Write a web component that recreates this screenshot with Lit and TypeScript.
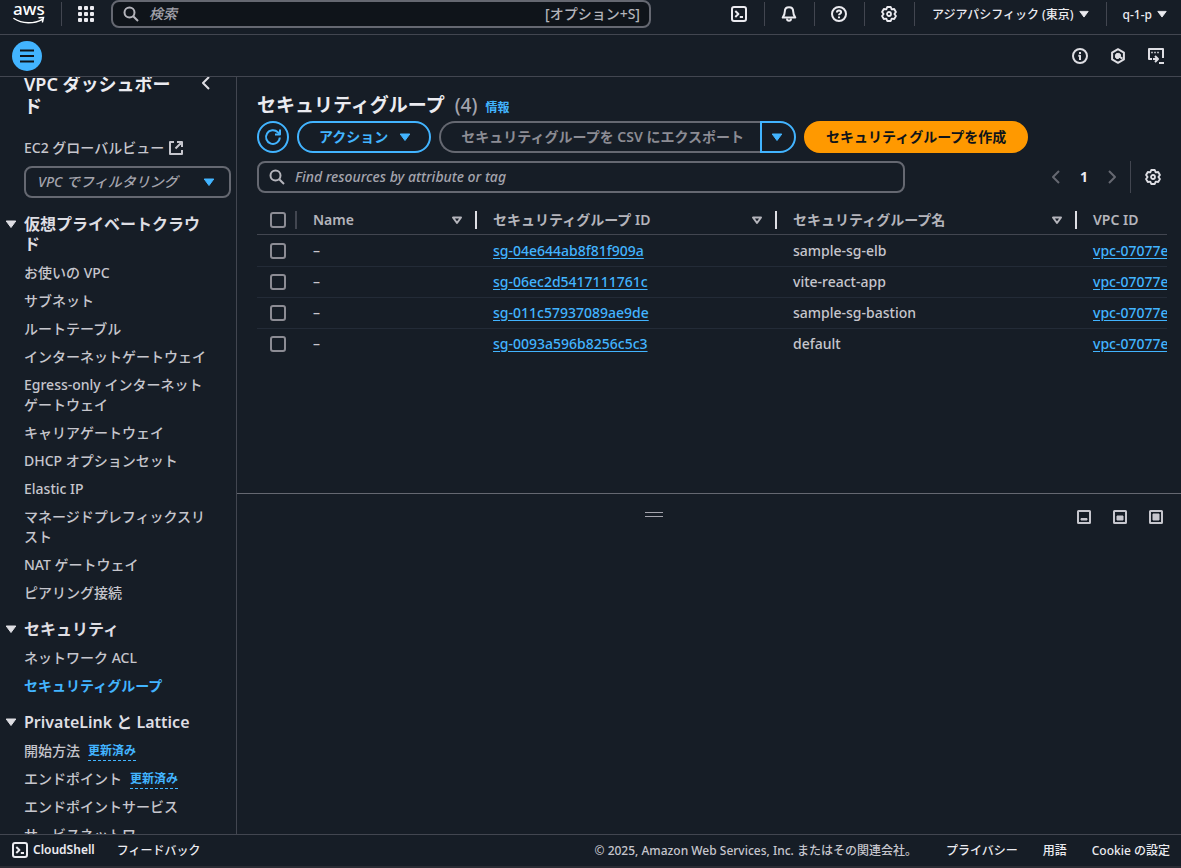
import { LitElement, html, svg, css, nothing } from "lit";
import { customElement, property } from "lit/decorators.js";

/** Outline of a six-lobed gear centred in a 16px box. */
const gearPath = (() => {
  const at = (deg: number, r: number) => {
    const a = (deg * Math.PI) / 180;
    return `${(8 + r * Math.cos(a)).toFixed(2)} ${(8 + r * Math.sin(a)).toFixed(2)}`;
  };
  const points: string[] = [];
  for (let k = 0; k < 6; k++) {
    const a = 60 * k - 90;
    points.push(at(a - 14, 7.2), at(a + 14, 7.2), at(a + 30, 5.4));
  }
  return `M${points.join("L")}Z`;
})();

const icons: Record<string, unknown> = {
  search: svg`<circle cx="6.5" cy="6.5" r="5" /><path d="M10.2 10.2 15 15" />`,
  shell: svg`<rect x="1" y="1" width="14" height="14" rx="2" /><path d="M4.3 5 7.4 8 4.3 11M8.8 11H12" />`,
  bell: svg`<path d="M8 1.2c-2.7 0-4.2 1.9-4.2 4.4 0 3.2-.9 4.4-2.1 6h12.6c-1.2-1.6-2.1-2.8-2.1-6 0-2.5-1.5-4.4-4.2-4.4Z" /><path d="M6 12.5c0 1.3.8 2.2 2 2.2s2-.9 2-2.2" />`,
  help: svg`<circle cx="8" cy="8" r="7" /><path d="M5.9 6.5c0-1.3.9-2 2.1-2s2.1.7 2.1 1.8c0 1.5-2.1 1.5-2.1 3" /><path d="M8 10.6v1.600" />`,
  gear: svg`<path d=${gearPath} stroke-width="1.900" /><circle cx="8" cy="8" r="2" stroke-width="1.800" />`,
  info: svg`<circle cx="8" cy="8" r="7" /><path d="M8 4v2M6.300 7.700H8V12" />`,
  hex: svg`<path d="M8 1.200 13.900 4.600v6.800L8 14.800 2.100 11.400V4.600Z" /><path class="solid" d="M10.700 8.300A2.700 2.700 0 1 0 8 10.700Z" stroke-width="0" /><path d="M8 8l4.500 2.600" />`,
  screen: svg`<path d="M4 11H1V1h14v9" /><path d="M4 3.700v1.600M7 3.700v1.600M10 3.700v1.600" stroke-width="1.500" /><path d="M5 11h4.500M7 8l3 3-3 3M11 15h5" />`,
  menu: svg`<path d="M1 2.500h14M1 8h14M1 13.500h14" />`,
  left: svg`<path d="M11 2 5 8l6 6" />`,
  right: svg`<path d="m5 2 6 6-6 6" />`,
  external: svg`<path d="M6 2H2v12h12v-4M9 2h5v5M14 2 7.500 8.500" />`,
  refresh: svg`<path d="M14.800 8.500A6.900 6.900 0 1 1 12.900 3.300l2 2" /><path d="M15 .5v5h-5" />`,
  caret: svg`<path class="solid" d="M3.200 5h9.600L8 11.500Z" />`,
  sort: svg`<path d="M4 5.500h8L8 11Z" />`,
  panelLow: svg`<rect x="2" y="2" width="12" height="12" rx=".5" /><path class="solid" d="M5 9.500h6V11H5Z" />`,
  panelMid: svg`<rect x="2" y="2" width="12" height="12" rx=".5" /><path class="solid" d="M5 7h6v4H5Z" />`,
  panelFull: svg`<rect x="2" y="2" width="12" height="12" rx=".5" /><path class="solid" d="M5 5h6v6H5Z" />`,
};

@customElement("ui-icon")
export class UiIcon extends LitElement {
  @property() name = "";
  static styles = css`
    :host { display: inline-flex; width: 16px; height: 16px; flex: none; }
    svg { width: 100%; height: 100%; fill: none; stroke: currentColor; stroke-width: 2; stroke-linejoin: round; overflow: visible; }
    .solid { fill: currentColor; stroke-width: 1; }
  `;
  render() {
    return html`<svg viewBox="0 0 16 16" aria-hidden="true">${icons[this.name] ?? nothing}</svg>`;
  }
}

interface NavItem { label: string; badge?: string; active?: boolean }
interface NavSection { title: string; items: NavItem[] }

const sections: NavSection[] = [
  {
    title: "仮想プライベートクラウド",
    items: [
      { label: "お使いの VPC" },
      { label: "サブネット" },
      { label: "ルートテーブル" },
      { label: "インターネットゲートウェイ" },
      { label: "Egress-only インターネットゲートウェイ" },
      { label: "キャリアゲートウェイ" },
      { label: "DHCP オプションセット" },
      { label: "Elastic IP" },
      { label: "マネージドプレフィックスリスト" },
      { label: "NAT ゲートウェイ" },
      { label: "ピアリング接続" },
    ],
  },
  {
    title: "セキュリティ",
    items: [{ label: "ネットワーク ACL" }, { label: "セキュリティグループ", active: true }],
  },
  {
    title: "PrivateLink と Lattice",
    items: [
      { label: "開始方法", badge: "更新済み" },
      { label: "エンドポイント", badge: "更新済み" },
      { label: "エンドポイントサービス" },
      { label: "サービスネットワー" },
    ],
  },
];

const groups = [
  { id: "sg-04e644ab8f81f909a", name: "sample-sg-elb" },
  { id: "sg-06ec2d5417111761c", name: "vite-react-app" },
  { id: "sg-011c57937089ae9de", name: "sample-sg-bastion" },
  { id: "sg-0093a596b8256c5c3", name: "default" },
];

const base = css`
  * { box-sizing: border-box; }
  button, input, select { font: inherit; color: inherit; margin: 0; }
  button { background: none; border: 0; padding: 0; cursor: pointer; display: inline-flex; align-items: center; justify-content: center; }
  a { color: inherit; text-decoration: none; }
`;

@customElement("console-header")
export class ConsoleHeader extends LitElement {
  static styles = [
    base,
    css`
      :host { display: block; color: #ebebf0; }
      .bar { display: flex; align-items: center; height: 35px; padding: 0 12px 6px 13px; border-bottom: 1px solid #424650; font-size: 12px; }
      .home { display: flex; }
      .logo { width: 32px; height: 24px; display: block; }
      .logo text { font: 500 17px "Noto Sans", sans-serif; fill: #fff; }
      .logo path { fill: none; stroke: #fff; stroke-linecap: round; }
      .rule { width: 1px; height: 24px; background: #424650; flex: none; }
      .logo-rule { margin: 0 16px; }
      .search { flex: 0 1 540px; margin-left: 17px; height: 28px; display: flex; align-items: center; gap: 10px; padding: 0 9px 0 10px; background: #0f141a; border: 2px solid #656871; border-radius: 8px; color: #b4b4bb; font-size: 14px; line-height: 20px; }
      .search input { flex: 1; min-width: 0; background: none; border: 0; outline: 0; padding: 0; }
      .search input::placeholder { color: #a4a4ad; opacity: 1; font-style: italic; }
      .spacer { flex: 1; }
      .tools { display: flex; align-items: center; }
      .tool { width: 49px; height: 24px; }
      .menu { gap: 3px; }
      .menu ui-icon { width: 14px; height: 14px; }
      .region { padding: 0 15px 0 17px; }
      .account { padding-left: 16px; }
      .sub { display: flex; align-items: center; justify-content: space-between; height: 42px; padding: 0 17px 0 12px; border-bottom: 1px solid #424650; }
      .burger { width: 30px; height: 30px; border-radius: 50%; background: #42b4ff; color: #0f141a; }
      .sub-tools { display: flex; gap: 22px; color: #dedee3; }
    `,
  ];
  render() {
    return html`
      <header class="bar">
        <a class="home" href="#" aria-label="aws">
          <svg class="logo" viewBox="0 0 32 24">
            <text x="0" y="13">aws</text>
            <path d="M1 16.500c8 5.500 20 5.500 28.500.8M26 15.800l4.500-.2-1 4.200" stroke-width="1.500" />
          </svg>
        </a>
        <span class="rule logo-rule"></span>
        <button aria-label="サービス">
          <svg width="16" height="16" fill="currentColor">
            ${[0, 6, 12].map((y) => [0, 6, 12].map((x) => svg`<rect x=${x} y=${y} width="4" height="4" rx="1" />`))}
          </svg>
        </button>
        <label class="search">
          <ui-icon name="search"></ui-icon>
          <input type="text" placeholder="検索" aria-label="検索" />
          <span>[オプション+S]</span>
        </label>
        <span class="spacer"></span>
        <div class="tools">
          <button class="tool" aria-label="CloudShell"><ui-icon name="shell"></ui-icon></button>
          <span class="rule"></span>
          <button class="tool" aria-label="通知"><ui-icon name="bell"></ui-icon></button>
          <span class="rule"></span>
          <button class="tool" aria-label="ヘルプ"><ui-icon name="help"></ui-icon></button>
          <span class="rule"></span>
          <button class="tool" aria-label="設定"><ui-icon name="gear"></ui-icon></button>
          <span class="rule"></span>
          <button class="menu region">アジアパシフィック (東京)<ui-icon name="caret"></ui-icon></button>
          <span class="rule"></span>
          <button class="menu account">q-1-p<ui-icon name="caret"></ui-icon></button>
        </div>
      </header>
      <div class="sub">
        <button class="burger" aria-label="メニュー"><ui-icon name="menu"></ui-icon></button>
        <div class="sub-tools">
          <button aria-label="情報"><ui-icon name="info"></ui-icon></button>
          <button aria-label="Amazon Q"><ui-icon name="hex"></ui-icon></button>
          <button aria-label="CloudShell"><ui-icon name="screen"></ui-icon></button>
        </div>
      </div>
    `;
  }
}

@customElement("side-nav")
export class SideNav extends LitElement {
  static styles = [
    base,
    css`
      :host { display: block; flex: 0 0 237px; overflow: hidden; border-right: 1px solid #424650; color: #c6c6cd; font-size: 14px; line-height: 20px; }
      .head { display: flex; justify-content: space-between; align-items: flex-start; margin-top: -4px; padding: 0 22px 0 24px; color: #ebebf0; }
      .title { margin: 0; width: 152px; font-size: 18px; line-height: 22px; font-weight: 600; }
      .close { margin-top: 2px; color: #dedee3; }
      .top { padding: 20px 5px 0 24px; }
      .ext { display: flex; align-items: center; gap: 4px; line-height: 22px; }
      .filter { margin-top: 7px; display: flex; align-items: center; height: 32px; border: 2px solid #656871; border-radius: 8px; padding-right: 12px; color: #42b4ff; }
      .filter select { flex: 1; min-width: 0; appearance: none; background: none; border: 0; outline: 0; padding: 0 12px; font-style: italic; color: #a4a4ad; }
      section { margin-top: 16px; }
      .section-title { display: grid; grid-template-columns: 16px 1fr; column-gap: 5px; margin: 0 36px 9px 3px; font-size: 16px; line-height: 20px; font-weight: 600; color: #dedee3; }
      .section-title ui-icon { margin-top: 2px; }
      ul { list-style: none; margin: 0; padding: 0 27px 0 24px; display: grid; row-gap: 8px; }
      li { display: flex; align-items: center; }
      .active { color: #42b4ff; font-weight: 600; }
      .badge { margin-left: 8px; font-size: 12px; line-height: 18px; font-weight: 700; color: #42b4ff; border-bottom: 1px dashed #42b4ff; }
    `,
  ];
  render() {
    return html`
      <div class="head">
        <h2 class="title"><a href="#">VPC ダッシュボード</a></h2>
        <button class="close" aria-label="閉じる"><ui-icon name="left"></ui-icon></button>
      </div>
      <div class="top">
        <a class="ext" href="#">EC2 グローバルビュー<ui-icon name="external"></ui-icon></a>
        <div class="filter">
          <select aria-label="VPC でフィルタリング"><option>VPC でフィルタリング</option></select>
          <ui-icon name="caret"></ui-icon>
        </div>
      </div>
      ${sections.map(
        (s) => html`
          <section>
            <h3 class="section-title"><ui-icon name="caret"></ui-icon><span>${s.title}</span></h3>
            <ul>
              ${s.items.map(
                (i) => html`<li><a href="#" class=${i.active ? "active" : "link"}>${i.label}</a>${
                  i.badge ? html`<button class="badge">${i.badge}</button>` : nothing
                }</li>`,
              )}
            </ul>
          </section>
        `,
      )}
    `;
  }
}

@customElement("group-list")
export class GroupList extends LitElement {
  static styles = [
    base,
    css`
      :host { display: block; flex: 1; min-height: 0; overflow: hidden; padding: 16px 14px 0 20px; font-size: 14px; line-height: 20px; color: #c6c6cd; }
      .title-row { display: flex; align-items: baseline; }
      h1 { margin: 0; font-size: 19px; line-height: 24px; font-weight: 700; color: #ebebf0; }
      .count { margin-left: 5px; font-weight: 500; color: #a4a4ad; }
      .info { margin-left: 8px; font-size: 12px; font-weight: 700; color: #42b4ff; }
      .actions { display: flex; gap: 8px; margin-top: 3px; font-weight: 600; }
      .btn { height: 32px; border: 2px solid #42b4ff; border-radius: 16px; padding: 0 19px; color: #42b4ff; white-space: nowrap; }
      .round { width: 32px; padding: 0; }
      .drop { gap: 9px; padding: 0 16px 0 20px; }
      .split { display: flex; }
      .export { border-color: #656871; border-right: 0; border-radius: 16px 0 0 16px; padding: 0 16px 0 20px; color: #8c8c94; }
      .more { width: 36px; padding: 0 2px 0 0; border-radius: 0 16px 16px 0; }
      .primary { padding: 0 20px; border-color: #ff9900; background: #ff9900; color: #0f141a; }
      .tools { display: flex; align-items: center; margin-top: 8px; }
      .search { flex: 0 1 648px; height: 32px; display: flex; align-items: center; gap: 10px; padding: 0 10px; border: 2px solid #656871; border-radius: 8px; color: #b4b4bb; }
      .search input { flex: 1; min-width: 0; background: none; border: 0; outline: 0; padding: 0; line-height: 20px; }
      .search input::placeholder { color: #a4a4ad; opacity: 1; font-style: italic; }
      .pager { margin-left: auto; display: flex; align-items: center; gap: 16px; color: #656871; }
      .page { width: 8px; font-weight: 700; color: #ebebf0; }
      .pref { margin-left: 10px; padding: 0 6px 0 14px; height: 32px; border-left: 1px solid #424650; color: #dedee3; }
      .table { margin-top: 12px; overflow: hidden; }
      table { border-collapse: separate; border-spacing: 0; table-layout: fixed; width: 1120px; }
      th, td { text-align: left; padding: 0; white-space: nowrap; }
      th { height: 30px; border-bottom: 1px solid #424650; font-weight: 600; color: #b4b4bb; }
      td { height: 31px; border-bottom: 1px solid #232b37; }
      tbody tr:first-child td { height: 32px; }
      tr:last-child td { border-bottom-color: transparent; }
      tr th { border-bottom-color: #424650; }
      thead tr:last-child th { border-bottom-color: #424650; }
      .check { width: 40px; }
      .col { width: 300px; }
      .col-name { width: 180px; }
      .cell { display: flex; align-items: center; justify-content: space-between; height: 18px; padding: 0 10px 0 16px; border-right: 2px solid #dedee3; }
      .check .cell { padding: 0 0 0 13px; border-right-color: #424650; }
      .body { padding-left: 16px; }
      .body-check { padding-left: 13px; }
      input[type="checkbox"] { appearance: none; display: block; width: 16px; height: 16px; border: 2px solid #8c8c94; border-radius: 3px; }
      td a { color: #42b4ff; text-decoration: underline; text-underline-offset: 2px; }
    `,
  ];
  private head(label: string) {
    return html`<div class="cell">${label}<ui-icon name="sort"></ui-icon></div>`;
  }
  render() {
    return html`
      <div class="title-row">
        <h1>セキュリティグループ <span class="count">(4)</span></h1>
        <a class="info" href="#">情報</a>
      </div>
      <div class="actions">
        <button class="btn round" aria-label="更新"><ui-icon name="refresh"></ui-icon></button>
        <button class="btn drop">アクション<ui-icon name="caret"></ui-icon></button>
        <div class="split">
          <button class="btn export" disabled>セキュリティグループを CSV にエクスポート</button>
          <button class="btn more" aria-label="その他"><ui-icon name="caret"></ui-icon></button>
        </div>
        <button class="btn primary">セキュリティグループを作成</button>
      </div>
      <div class="tools">
        <label class="search">
          <ui-icon name="search"></ui-icon>
          <input type="text" placeholder="Find resources by attribute or tag" aria-label="Find resources by attribute or tag" />
        </label>
        <div class="pager">
          <button aria-label="前へ"><ui-icon name="left"></ui-icon></button>
          <button class="page">1</button>
          <button aria-label="次へ"><ui-icon name="right"></ui-icon></button>
        </div>
        <button class="pref" aria-label="設定"><ui-icon name="gear"></ui-icon></button>
      </div>
      <div class="table">
        <table>
          <thead>
            <tr>
              <th class="check"><div class="cell"><input type="checkbox" aria-label="すべて選択" /></div></th>
              <th class="col-name">${this.head("Name")}</th>
              <th class="col">${this.head("セキュリティグループ ID")}</th>
              <th class="col">${this.head("セキュリティグループ名")}</th>
              <th class="col">${this.head("VPC ID")}</th>
            </tr>
          </thead>
          <tbody>
            ${groups.map(
              (g) => html`<tr>
                <td class="body-check"><input type="checkbox" aria-label=${g.id} /></td>
                <td class="body">–</td>
                <td class="body"><a href="#">${g.id}</a></td>
                <td class="body">${g.name}</td>
                <td class="body"><a href="#">vpc-07077e</a></td>
              </tr>`,
            )}
          </tbody>
        </table>
      </div>
    `;
  }
}

@customElement("split-panel")
export class SplitPanel extends LitElement {
  static styles = [
    base,
    css`
      :host { display: flex; align-items: flex-start; gap: 24px; flex: 0 0 45%; border-top: 1px solid #656871; padding: 15px 17px 0 18px; color: #c6c6cd; }
      .handle { flex: 1; display: flex; justify-content: center; padding-top: 3px; }
      .grip { width: 18px; height: 5px; border: solid #a4a4ad; border-width: 1px 0; }
      .views { display: flex; gap: 20px; }
    `,
  ];
  render() {
    return html`
      <div class="handle"><button class="grip" aria-label="サイズ変更"></button></div>
      <div class="views">
        <button aria-label="小"><ui-icon name="panelLow"></ui-icon></button>
        <button aria-label="中"><ui-icon name="panelMid"></ui-icon></button>
        <button aria-label="大"><ui-icon name="panelFull"></ui-icon></button>
      </div>
    `;
  }
}

@customElement("app-root")
export class AppRoot extends LitElement {
  static styles = [
    base,
    css`
      :host { display: flex; flex-direction: column; height: 100vh; overflow: hidden; background: #161d26; color: #c6c6cd; font-family: "Noto Sans", "Noto Sans CJK JP", sans-serif; font-size: 14px; font-weight: 500; }
      .body { flex: 1; min-height: 0; display: flex; }
      main { flex: 1; min-width: 0; display: flex; flex-direction: column; }
      footer { display: flex; align-items: center; height: 34px; padding: 0 11px 2px 12px; border-top: 1px solid #424650; border-bottom: 2px solid #2a2c34; font-size: 12px; color: #ebebf0; }
      .shell { gap: 5px; font-weight: 600; margin-right: 22px; }
      .copy { margin-left: auto; margin-right: 29px; color: #c6c6cd; }
      .links { display: flex; gap: 25px; }
    `,
  ];
  render() {
    return html`
      <console-header></console-header>
      <div class="body">
        <side-nav></side-nav>
        <main>
          <group-list></group-list>
          <split-panel></split-panel>
        </main>
      </div>
      <footer>
        <button class="shell"><ui-icon name="shell"></ui-icon>CloudShell</button>
        <a href="#">フィードバック</a>
        <span class="copy">© 2025, Amazon Web Services, Inc. またはその関連会社。</span>
        <nav class="links">
          <a href="#">プライバシー</a>
          <a href="#">用語</a>
          <a href="#">Cookie の設定</a>
        </nav>
      </footer>
    `;
  }
}
